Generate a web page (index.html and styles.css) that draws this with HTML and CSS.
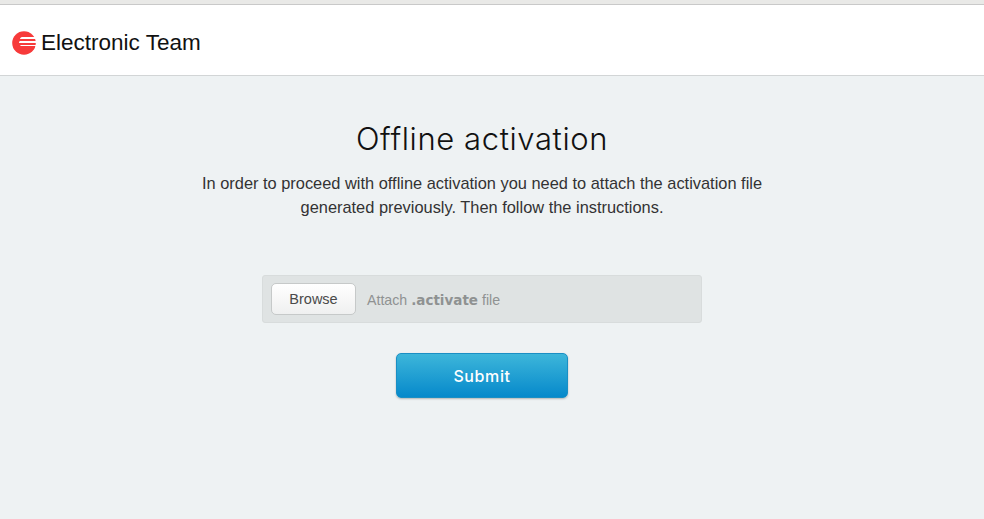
FILE: index.html
```html
<!DOCTYPE html>
<html lang="en">
<head>
  <meta charset="UTF-8">
  <title>Offline activation</title>
  <link rel="stylesheet" href="styles.css">
</head>
<body>

  <header class="header">
    <a class="logo" href="#">
      <svg class="logo-icon" width="24" height="24" viewBox="0 0 24 24">
        <circle cx="12" cy="12" r="11.8" fill="#f73a3a"/>
        <path d="M10 6H24V8H8C8 7 9 6 10 6Z" fill="#fff"/>
        <path d="M8 10H24V12H7C7 11 7.4 10.4 8 10Z" fill="#fff"/>
        <path d="M8 14H24V15H10C9 15 8.4 14.6 8 14Z" fill="#fff"/>
      </svg>
      <span>Electronic Team</span>
    </a>
  </header>

  <main class="content">
    <h1>Offline activation</h1>
    <p class="intro">In order to proceed with offline activation you need to attach the activation file<br>generated previously. Then follow the instructions.</p>

    <form class="activation-form">
      <div class="file-box">
        <button type="button" class="browse">Browse</button>
        <span class="file-hint">Attach <b>.activate</b> file</span>
      </div>
      <button type="submit" class="submit">Submit</button>
    </form>
  </main>

</body>
</html>
```

FILE: styles.css
```css
html, body {
  height: 100%;
}

body {
  margin: 0;
  font-family: "Liberation Sans", Arial, sans-serif;
  background-color: #eef2f3;
  color: #333;
  border-top: 4px solid #e9e9e7;
  box-sizing: border-box;
  overflow: hidden;
}

.header {
  height: 70px;
  box-sizing: content-box;
  background: #fff;
  border-top: 1px solid #c9c9c9;
  border-bottom: 1px solid #d2d5d6;
  display: flex;
  align-items: center;
  padding-left: 12px;
}

.logo {
  display: flex;
  align-items: center;
  gap: 5px;
  color: #111;
  font-size: 22.5px;
  text-decoration: none;
  margin-top: 6px;
}

.content {
  text-align: center;
  padding-right: 20px;
}

h1 {
  font-family: Inter, sans-serif;
  font-weight: 300;
  font-size: 31px;
  line-height: 36px;
  letter-spacing: 0.6px;
  color: #111;
  margin: 45px 0 0;
}

.intro {
  font-size: 16.4px;
  line-height: 24px;
  color: #333;
  margin: 14px 0 0;
}

.activation-form {
  display: flex;
  flex-direction: column;
  align-items: center;
  margin-top: 56px;
}

.file-box {
  width: 440px;
  height: 48px;
  box-sizing: border-box;
  background: #dfe3e3;
  border: 1px solid #d8dcdc;
  border-radius: 3px;
  display: flex;
  align-items: center;
  padding-left: 8px;
  gap: 11px;
}

.browse {
  width: 85px;
  height: 32px;
  background: linear-gradient(#fff, #eff0f0);
  border: 1px solid #c6c9c9;
  border-radius: 5px;
  font-family: "Liberation Sans", Arial, sans-serif;
  font-size: 14.5px;
  color: #4a4a4a;
  cursor: pointer;
  margin-top: -1px;
  padding: 0;
}

.file-hint {
  font-size: 14.2px;
  color: #8f9292;
  margin-top: 2px;
}

.file-hint b {
  font-family: "DejaVu Sans", sans-serif;
  font-size: 13.5px;
}

.submit {
  width: 172px;
  height: 45px;
  margin-top: 30px;
  background: linear-gradient(#3db6da, #0689cb);
  border: 1px solid #1a8fc4;
  border-radius: 5px;
  box-shadow: 0 1px 2px rgba(0, 0, 0, 0.25);
  color: #fff;
  font-family: Inter, sans-serif;
  font-size: 16px;
  font-weight: 500;
  letter-spacing: 0.6px;
  cursor: pointer;
}

.submit:hover {
  background: #0689cb;
}
```
